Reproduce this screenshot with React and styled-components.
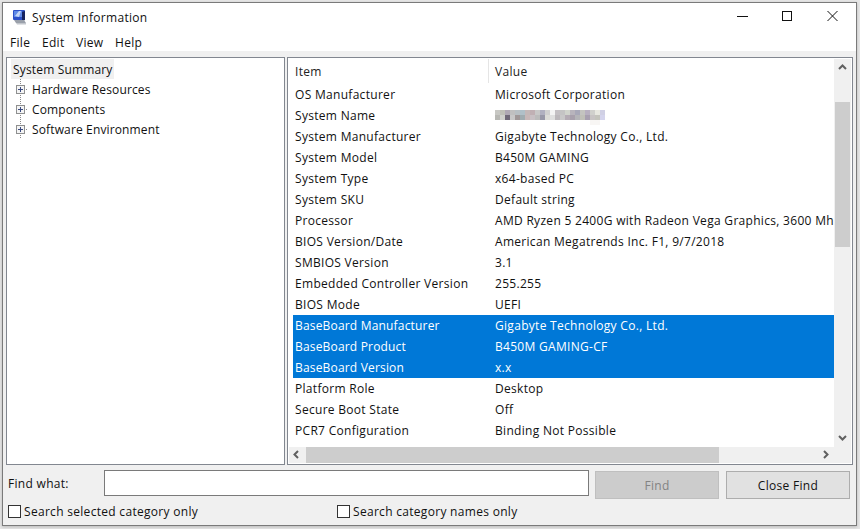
import React from 'react';
import styled, { createGlobalStyle } from 'styled-components';

const Global = createGlobalStyle`
  html, body { margin: 0; padding: 0; background: #e9e9e9; }
  body { width: 860px; height: 529px; overflow: hidden; font-family: "Open Sans", "Noto Sans", sans-serif; }
  #root { width: 860px; height: 529px; }
  * { box-sizing: border-box; }
`;

const UI_TEXT = `
  font-family: "Open Sans", "Noto Sans", sans-serif;
  font-size: 12px;
  letter-spacing: 0.3px;
  line-height: 16px;
  white-space: nowrap;
`;

const Screen = styled.div`
  position: relative; width: 860px; height: 529px; background: #e6e6e6;
`;
const Win = styled.div`
  position: absolute; left: 2px; top: 2px; width: 855px; height: 524px;
  background: #f0f0f0; border: 1px solid #7a7a7a; box-shadow: 0 1px 3px rgba(0,0,0,.2);
`;
const TitleBar = styled.div`
  position: absolute; left: 0; top: 0; right: 0; height: 28px; background: #fff;
`;
const AppIcon = styled.svg`
  position: absolute; left: 9px; top: 6px; width: 15px; height: 17px;
`;
const Title = styled.div`
  ${UI_TEXT} position: absolute; left: 29px; top: 7px; color: #111;
`;
const Caption = styled.svg`
  position: absolute; top: 7px; width: 12px; height: 12px; left: ${p => p.$x}px;
`;
const MenuBar = styled.div`
  position: absolute; left: 0; top: 28px; right: 0; height: 20px; background: #fff;
`;
const MenuItem = styled.span`
  ${UI_TEXT} position: absolute; top: 4px; left: ${p => p.$x}px; color: #111;
`;
const Panel = styled.div`
  position: absolute; top: 54px; height: 408px; left: ${p => p.$x}px; width: ${p => p.$w}px;
  background: #fff; border: 1px solid #828790; overflow: hidden;
`;
const TreeSelected = styled.div`
  ${UI_TEXT} letter-spacing: 0.16px; position: absolute; left: 4px; top: 1px; width: 103px; height: 20px;
  background: #f0f0f0; padding: 3px 0 0 2px; color: #111;
`;
const TreeLabel = styled.div`
  ${UI_TEXT} letter-spacing: 0.14px; position: absolute; left: 25px; top: ${p => p.$y}px; color: #111;
`;
const TreeLines = styled.svg`
  position: absolute; left: 9px; top: 21px; width: 22px; height: 64px;
`;
const HeaderCell = styled.div`
  ${UI_TEXT} position: absolute; top: 6px; left: ${p => p.$x}px; color: #222;
`;
const HeaderSep = styled.div`
  position: absolute; left: 200px; top: 1px; width: 1px; height: 24px; background: #e5e5e5;
`;
const Row = styled.div`
  position: absolute; left: 5px; width: 541px; height: 21px; top: ${p => p.$y}px; overflow: hidden;
  background: ${p => (p.$sel ? '#0078d7' : 'transparent')};
  color: ${p => (p.$sel ? '#fff' : '#111')};
`;
const Cell = styled.div`
  ${UI_TEXT} position: absolute; top: 3px; left: ${p => p.$x}px; color: inherit;
  letter-spacing: ${p => (p.$tight ? '0.18px' : '0.3px')};
`;
const Mosaic = styled.svg`
  position: absolute; left: 202px; top: 5px; width: 110px; height: 15px;
`;
const VTrack = styled.div`
  position: absolute; left: 546px; top: 1px; width: 17px; height: 388px; background: #f0f0f0;
`;
const VThumb = styled.div`
  position: absolute; left: 1px; width: 15px; top: 43px; height: 145px; background: #cdcdcd;
`;
const HTrack = styled.div`
  position: absolute; left: 1px; top: 389px; width: 562px; height: 16px; background: #f0f0f0;
`;
const HThumb = styled.div`
  position: absolute; left: 17px; top: 0; width: 413px; height: 16px; background: #cdcdcd;
`;
const Corner = styled.div`
  position: absolute; left: 546px; top: 389px; width: 17px; height: 16px; background: #f0f0f0;
`;
const Arrow = styled.svg`
  position: absolute; width: 9px; height: 9px; left: ${p => p.$x}px; top: ${p => p.$y}px;
`;
const Label = styled.div`
  ${UI_TEXT} position: absolute; left: ${p => p.$x}px; top: ${p => p.$y}px; color: #111;
`;
const FindInput = styled.div`
  position: absolute; left: 101px; top: 467px; width: 485px; height: 26px;
  background: #fff; border: 1px solid #7a7a7a;
`;
const Button = styled.div`
  ${UI_TEXT} position: absolute; top: 468px; width: 124px; height: 28px; left: ${p => p.$x}px;
  display: flex; align-items: center; justify-content: center; padding-top: 1px;
  background: ${p => (p.$off ? '#cccccc' : '#e1e1e1')};
  border: 1px solid ${p => (p.$off ? '#bfbfbf' : '#adadad')};
  color: ${p => (p.$off ? '#838383' : '#111')};
`;
const Check = styled.div`
  position: absolute; top: 502px; width: 13px; height: 13px; left: ${p => p.$x}px;
  background: #fff; border: 1px solid #333;
`;

const rows = [
  ['OS Manufacturer', 'Microsoft Corporation'],
  ['System Name', null],
  ['System Manufacturer', 'Gigabyte Technology Co., Ltd.'],
  ['System Model', 'B450M GAMING'],
  ['System Type', 'x64-based PC'],
  ['System SKU', 'Default string'],
  ['Processor', 'AMD Ryzen 5 2400G with Radeon Vega Graphics, 3600 Mh'],
  ['BIOS Version/Date', 'American Megatrends Inc. F1, 9/7/2018'],
  ['SMBIOS Version', '3.1'],
  ['Embedded Controller Version', '255.255'],
  ['BIOS Mode', 'UEFI'],
  ['BaseBoard Manufacturer', 'Gigabyte Technology Co., Ltd.', true],
  ['BaseBoard Product', 'B450M GAMING-CF', true],
  ['BaseBoard Version', 'x.x', true],
  ['Platform Role', 'Desktop'],
  ['Secure Boot State', 'Off'],
  ['PCR7 Configuration', 'Binding Not Possible'],
];

const mosaicTop = ['#c8c8c4','#c0c0b8','#b0a8b4','#c0c0c0','#b8c0c4','#b0c0c8','#c4b8b8','#c0b0b4','#c8c8c8','#b0b0c0','#d0d0d0','#f4f4f4','#c4c0c4','#c4c4c4','#d0d4cc','#b8b4bc','#a8a8b8','#c4c4c0','#b8b0c0','#d0d0cc','#e8e8e0','#d0d0e4'];
const mosaicBottom = ['#b8b8b4','#d0d0cc','#706878','#c8c8c8','#a09898','#a0acb0','#c8b8b8','#c8c0c4','#bcbcbc','#9898a8','#dcdcd8','#e0e0e0','#bcb8bc','#c8c8c8','#b4acb4','#a8a0ac','#b4b4b8','#c0c0b8','#a8a0b0','#c8c4c4','#c4c4bc','#d4d4ec'];

function Plus({ y }) {
  return (
    <g transform={`translate(0 ${y})`}>
      <rect x="0.5" y="0.5" width="8" height="8" fill="#f4f4f4" stroke="#8e8f8f" />
      <path d="M2 4.5h5M4.5 2v5" stroke="#3a4a80" strokeWidth="1" />
      <path d="M10 4.5h2" stroke="#888" strokeWidth="1" strokeDasharray="1 1" />
    </g>
  );
}

export default function App() {
  return (
    <Screen>
      <Global />
      <Win>
        <TitleBar>
          <AppIcon viewBox="0 0 15 17">
            <rect x="1" y="1" width="12" height="10" rx="1" fill="#2c50c8" />
            <rect x="2" y="2" width="8" height="6" fill="#5f8ae6" />
            <path d="M3 7l4-5h2l-2 6z" fill="#c4d6f6" />
            <path d="M10 3l3-1v9l-3 1z" fill="#16235f" />
            <path d="M2 11h10l2 3H4z" fill="#9aa0aa" />
            <path d="M4 14h10v1.5H5z" fill="#c2c6cc" />
          </AppIcon>
          <Title>System Information</Title>
          <Caption $x={734} viewBox="0 0 12 12"><path d="M0 6.5h11" stroke="#111" fill="none" /></Caption>
          <Caption $x={779} viewBox="0 0 12 12"><rect x="0.5" y="1.500" width="9" height="9" stroke="#111" fill="none" /></Caption>
          <Caption $x={824} viewBox="0 0 12 12"><path d="M0.5 1l10 10M10.500 1l-10 10" stroke="#111" fill="none" /></Caption>
        </TitleBar>
        <MenuBar>
          <MenuItem $x={7}>File</MenuItem>
          <MenuItem $x={39}>Edit</MenuItem>
          <MenuItem $x={73}>View</MenuItem>
          <MenuItem $x={112}>Help</MenuItem>
        </MenuBar>

        <Panel $x={3} $w={279}>
          <TreeSelected>System Summary</TreeSelected>
          <TreeLines viewBox="0 0 22 64">
            <path d="M4.500 0v60" stroke="#888" strokeDasharray="1 1" fill="none" />
            <Plus y={6} />
            <Plus y={26} />
            <Plus y={46} />
          </TreeLines>
          <TreeLabel $y={24}>Hardware Resources</TreeLabel>
          <TreeLabel $y={44}>Components</TreeLabel>
          <TreeLabel $y={64}>Software Environment</TreeLabel>
        </Panel>

        <Panel $x={284} $w={566}>
          <HeaderCell $x={7}>Item</HeaderCell>
          <HeaderSep />
          <HeaderCell $x={207}>Value</HeaderCell>
          {rows.map(([k, v, sel], i) => (
            <Row key={k} $y={26 + i * 21} $sel={sel}>
              <Cell $x={2} $tight={sel}>{k}</Cell>
              {v === null ? (
                <Mosaic viewBox="0 0 110 15">
                  {mosaicTop.map((c, n) => <rect key={n} x={n * 5} y="0" width="5" height="5" fill={c} />)}
                  {mosaicBottom.map((c, n) => <rect key={n} x={n * 5} y="5" width="5" height="5" fill={c} />)}
                  <rect x="95" y="10" width="10" height="5" fill="#f8f6f4" />
                </Mosaic>
              ) : (
                <Cell $x={202}>{v}</Cell>
              )}
            </Row>
          ))}
          <VTrack>
            <VThumb />
            <Arrow $x={4} $y={4} viewBox="0 0 9 9"><path d="M1 6l3.500-3.500L8 6" stroke="#606060" strokeWidth="2" fill="none" /></Arrow>
            <Arrow $x={4} $y={374} viewBox="0 0 9 9"><path d="M1 3l3.500 3.500L8 3" stroke="#606060" strokeWidth="2" fill="none" /></Arrow>
          </VTrack>
          <HTrack>
            <HThumb />
            <Arrow $x={3} $y={3} viewBox="0 0 9 9"><path d="M6 1L2.500 4.500L6 8" stroke="#606060" strokeWidth="2" fill="none" /></Arrow>
            <Arrow $x={532} $y={3} viewBox="0 0 9 9"><path d="M3 1l3.500 3.500L3 8" stroke="#606060" strokeWidth="2" fill="none" /></Arrow>
          </HTrack>
          <Corner />
        </Panel>

        <Label $x={5} $y={473}>Find what:</Label>
        <FindInput />
        <Button $x={592} $off>Find</Button>
        <Button $x={723}>Close Find</Button>
        <Check $x={5} />
        <Label $x={21} $y={501}>Search selected category only</Label>
        <Check $x={334} />
        <Label $x={350} $y={501}>Search category names only</Label>
      </Win>
    </Screen>
  );
}
